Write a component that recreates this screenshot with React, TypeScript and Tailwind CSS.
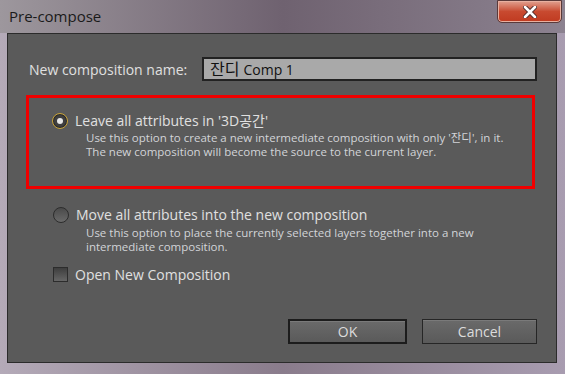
const font = { fontFamily: '"Open Sans", "Noto Sans CJK KR", sans-serif' };

const Radio = ({ checked }: { checked?: boolean }) => (
  <span
    className={
      "flex h-[16px] w-[16px] shrink-0 items-center justify-center rounded-full border " +
      (checked
        ? "border-[#c9a43a] bg-[#3f3f3f] shadow-[inset_0_0_0_1px_#2a2a2a]"
        : "border-[#2c2c2c] bg-gradient-to-b from-[#4a4a4a] to-[#6a6a6a]")
    }
  >
    {checked && <span className="h-[6px] w-[6px] rounded-full bg-[#e8e8e8]" />}
  </span>
);

export default function App() {
  return (
    <div
      className="flex h-[374px] w-[565px] flex-col overflow-hidden bg-gradient-to-r from-[#b4aab8] via-[#8a7c8c] to-[#a89cb0] text-[#dcdcdc]"
      style={font}
    >
      <div className="flex h-[33px] shrink-0 justify-between bg-gradient-to-r from-[#9d979d] via-[#6f6270] to-[#8c8290]">
        <span className="mt-[5px] pl-[9px] text-[15px] text-[#1a1a1a]">Pre-compose</span>
        <div className="mr-[3px] flex h-[23px] w-[65px] items-center justify-center rounded-b-[5px] border border-[#5a3a3a] bg-gradient-to-b from-[#e0a090] via-[#c84a30] to-[#c03a20] shadow-[inset_0_0_0_1px_#e8b0a0]">
          <svg width="14" height="12" viewBox="0 0 14 12">
            <path d="M2 1 L12 11 M12 1 L2 11" stroke="#4a2a2a" strokeWidth="4.5" strokeLinecap="round" />
            <path d="M2 1 L12 11 M12 1 L2 11" stroke="#ffffff" strokeWidth="2.6" strokeLinecap="round" />
          </svg>
        </div>
      </div>

      <div className="mb-[11px] ml-[7px] mr-[8px] flex flex-1 flex-col border border-[#2b2b2b] bg-[#5a5a5a]">
        <div className="mt-[23px] flex h-[24px] items-center">
          <span className="ml-[21px] w-[173px] text-[14px] text-[#e0e0e0]">New composition name:</span>
          <div className="flex h-[24px] w-[335px] items-center border-2 border-[#222] bg-[#a9a9a9] pl-[6px] text-[14px] text-[#111]">
            <span className="text-[16px]">잔디</span>
            <span className="ml-[4px]">Comp 1</span>
          </div>
        </div>

        <div className="ml-[18px] mt-[14px] h-[94px] w-[509px] border-[3px] border-[#f00000] pl-[23px] pt-[12px]">
          <div className="flex items-center gap-[7px]">
            <Radio checked />
            <span className="text-[14px] text-[#e0e0e0]">Leave all attributes in '3D공간'</span>
          </div>
          <div className="ml-[34px] text-[11.5px] leading-[14px] text-[#d2d4d8]">
            <div>Use this option to create a new intermediate composition with only '잔디', in it.</div>
            <div>The new composition will become the source to the current layer.</div>
          </div>
        </div>

        <div className="ml-[45px] mt-[15px] flex items-center gap-[7px]">
          <Radio />
          <span className="text-[14px] text-[#e0e0e0]">Move all attributes into the new composition</span>
        </div>
        <div className="ml-[78px] mt-[1px] text-[11.5px] leading-[14px] text-[#d2d4d8]">
          <div>Use this option to place the currently selected layers together into a new</div>
          <div>intermediate composition.</div>
        </div>

        <div className="ml-[45px] mt-[10px] flex items-center gap-[7px]">
          <span className="h-[15px] w-[15px] border border-[#2c2c2c] bg-gradient-to-b from-[#3e3e3e] to-[#666]" />
          <span className="text-[14px] text-[#e0e0e0]">Open New Composition</span>
        </div>

        <div className="mt-[34px] flex gap-[15px] pl-[280px]">
          <button className="h-[25px] w-[119px] border-2 border-[#1c1c1c] bg-gradient-to-b from-[#6a6a6a] to-[#5a5a5a] text-[14px] text-[#dcdcdc] shadow-[inset_0_1px_0_#7a7a7a]">
            OK
          </button>
          <button className="h-[25px] w-[115px] border border-[#262626] bg-gradient-to-b from-[#6a6a6a] to-[#5a5a5a] text-[14px] text-[#dcdcdc] shadow-[inset_0_1px_0_#7a7a7a]">
            Cancel
          </button>
        </div>
      </div>
    </div>
  );
}
